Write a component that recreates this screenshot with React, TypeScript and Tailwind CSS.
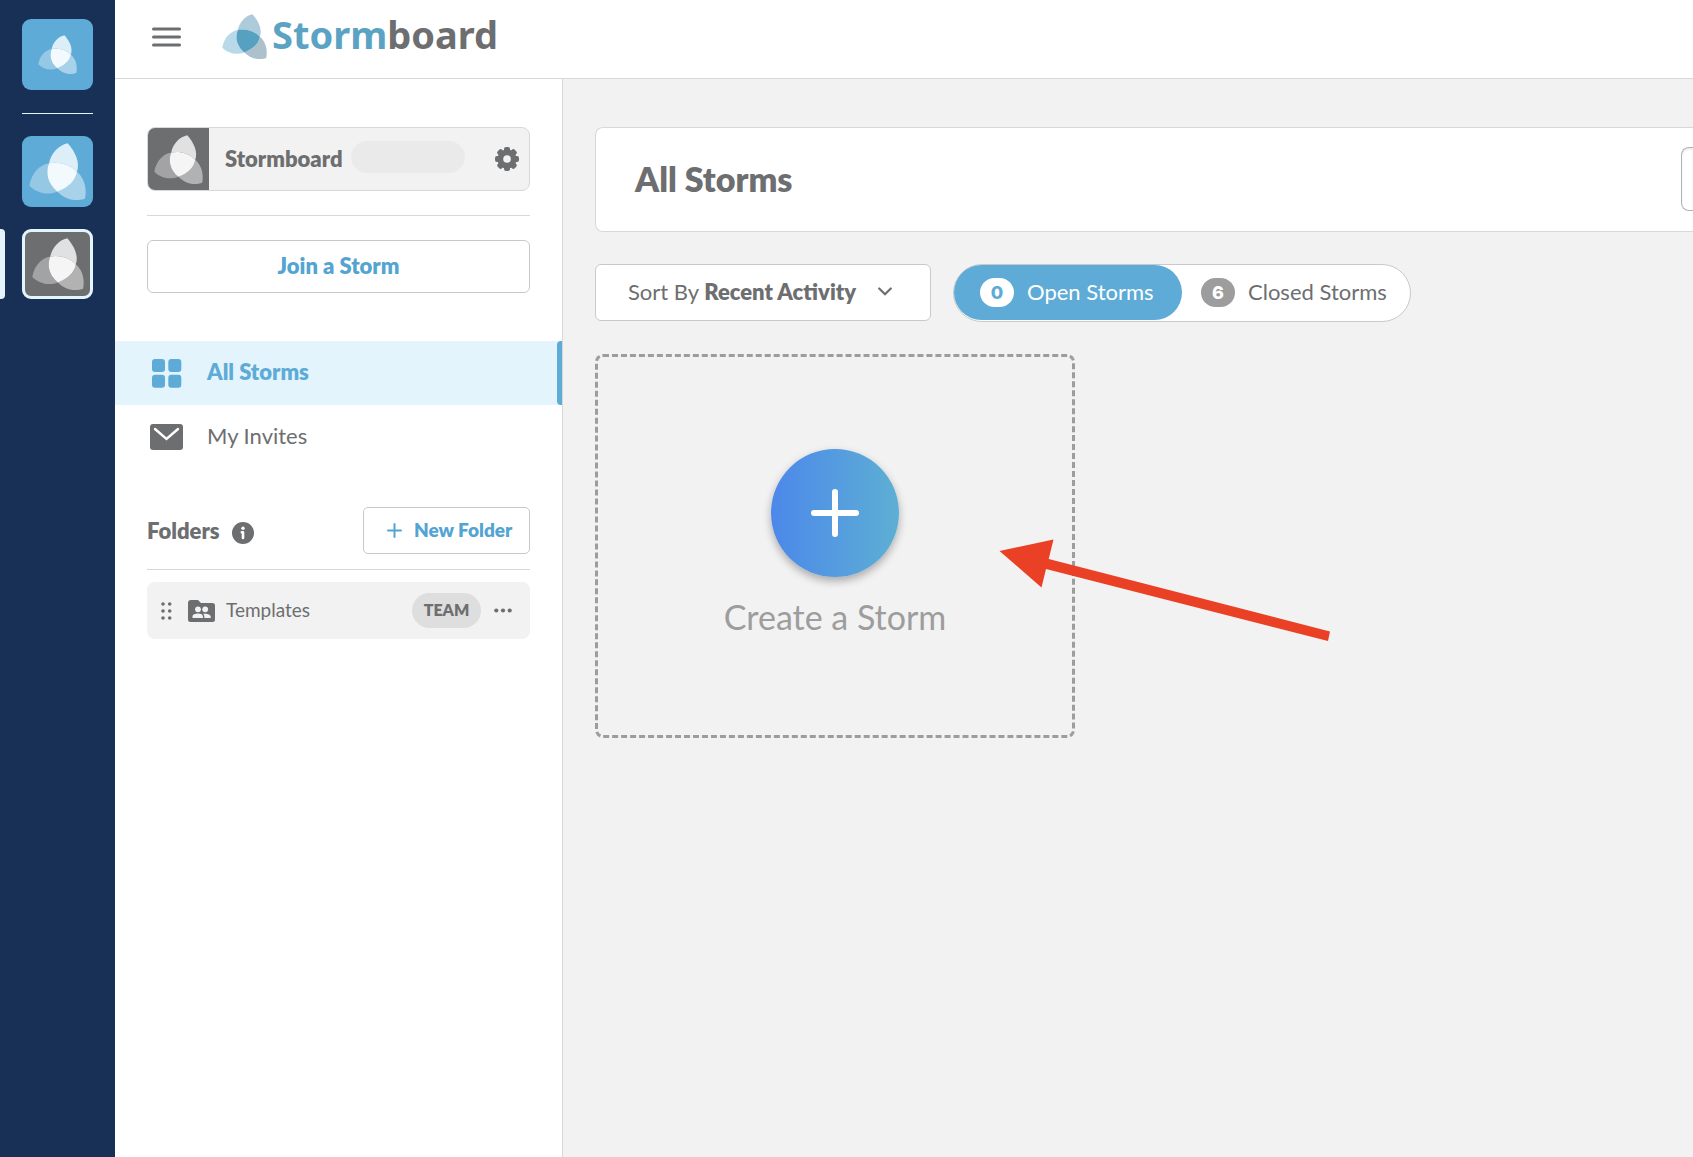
import React from "react";

type Tones = { left: string; top: string; right: string; center: string };

const BLUE_TONES: Tones = { left: "#94c8e5", top: "#dceef7", right: "#a7d2ea", center: "#f3fafd" };
const GREY_TONES: Tones = { left: "#a3a3a5", top: "#e1e1e2", right: "#b2b2b3", center: "#f5f5f5" };
const BRAND_TONES: Tones = { left: "#b9d9ea", top: "#aecbdb", right: "#adc1cc", center: "#57a1c0" };

function Petals({ tones, className }: { tones: Tones; className: string }) {
  return (
    <svg viewBox="21 21 171 171" className={className} aria-hidden="true">
      <path fill={tones.top} d="M137 22C160 48 175 80 165 107C143 85 110 76 81 82C87 54 108 28 137 22Z" />
      <path fill={tones.left} d="M22 149C30 108 55 86 81 82C70 110 76 143 106 167C78 178 45 172 22 149Z" />
      <path fill={tones.right} d="M165 107C188 127 195 158 189 188C160 198 130 191 106 167C138 155 161 134 165 107Z" />
      <path fill={tones.center} d="M81 82C110 76 143 85 165 107C161 134 138 155 106 167C76 143 70 110 81 82Z" />
    </svg>
  );
}

function Rail() {
  return (
    <nav aria-label="Teams" className="flex w-[115px] shrink-0 flex-col items-center bg-[#183055] pt-[19px]">
      <button aria-label="Home" className="flex size-[71px] items-center justify-center rounded-[9px] bg-[#5dabd6]">
        <Petals tones={BLUE_TONES} className="size-[39px]" />
      </button>
      <hr className="mt-[23px] mb-[22px] w-[71px] border-t border-[#e3f4fd]" />
      <button aria-label="Stormboard" className="flex size-[71px] items-center justify-center rounded-[9px] bg-[#5dabd6]">
        <Petals tones={BLUE_TONES} className="size-[57px]" />
      </button>
      <div className="relative mt-[22px] flex w-full justify-center">
        <span className="absolute inset-y-0 left-0 w-[5px] rounded-r bg-[#e3f4fd]" />
        <button
          aria-label="Current team"
          className="flex h-[70px] w-[71px] items-center justify-center rounded-[9px] border-[3px] border-[#e3f4fd] bg-[#6d6e70]"
        >
          <Petals tones={GREY_TONES} className="size-[52px]" />
        </button>
      </div>
    </nav>
  );
}

function Header() {
  return (
    <header className="flex h-[79px] items-center border-b border-[#d5d7de] bg-white pb-1 pl-[37px]">
      <button aria-label="Menu">
        <svg viewBox="0 0 29 20" className="h-5 w-[29px]" stroke="#6d6e70" strokeWidth="3" strokeLinecap="round">
          <path d="M1.5 2H27.5M1.5 10H27.5M1.5 18H27.5" />
        </svg>
      </button>
      <a href="#home" className="ml-[41px] flex items-center pb-[2px]">
        <Petals tones={BRAND_TONES} className="size-[45px]" />
        <span className="ml-[5px] pb-1 font-['Noto_Sans'] text-[38px] leading-10 font-bold text-[#5ba3c3]">
          Storm<span className="text-[#6d6e70]">board</span>
        </span>
      </a>
    </header>
  );
}

function Gear() {
  return (
    <svg viewBox="0 0 24 24" className="size-6" aria-hidden="true">
      <g fill="#6d6e70">
        {[0, 45, 90, 135].map((a) => (
          <rect key={a} x="9" y="0" width="6" height="24" rx="2" transform={`rotate(${a} 12 12)`} />
        ))}
        <circle cx="12" cy="12" r="9.6" />
      </g>
      <circle cx="12" cy="12" r="3.8" fill="#f2f2f2" />
    </svg>
  );
}

function Sidebar() {
  return (
    <aside className="w-[448px] shrink-0 border-r border-[#d5d9de] bg-white pt-12">
      <section className="mx-8">
        <div className="flex h-16 items-center overflow-hidden rounded-lg border border-[#d5d9de] bg-[#f2f2f2] pr-[10px]">
          <span className="flex h-full w-[61px] items-center justify-center bg-[#6d6e70]">
            <Petals tones={GREY_TONES} className="size-[49px]" />
          </span>
          <span className="ml-4 pb-[2px] text-[22px] font-extrabold">Stormboard</span>
          <span className="mb-1 ml-2 h-8 w-[114px] rounded-full bg-[#eaeaea]" />
          <button aria-label="Team settings" className="ml-auto">
            <Gear />
          </button>
        </div>
        <hr className="my-6 border-t border-[#d5d9de]" />
        <button className="h-[53px] w-full rounded-md border border-[#c8c9cb] pb-[2px] text-[22px] font-extrabold text-[#54a4d2]">
          Join a Storm
        </button>
      </section>

      <nav aria-label="Storms" className="mt-12 text-[22px]">
        <a href="#all" aria-current="page" className="relative flex h-16 items-center bg-[#e3f4fd] pl-[37px] font-extrabold text-[#5dabd6]">
          <svg viewBox="0 0 30 29" className="h-[29px] w-[30px]" fill="currentColor" aria-hidden="true">
            <rect x="0" y="0" width="13" height="13" rx="3" />
            <rect x="16.3" y="0" width="13" height="13" rx="3" />
            <rect x="0" y="15.7" width="13" height="13" rx="3" />
            <rect x="16.3" y="15.7" width="13" height="13" rx="3" />
          </svg>
          <span className="ml-[25px] pb-1">All Storms</span>
          <span className="absolute inset-y-0 right-0 w-[5px] rounded-l bg-[#5dabd6]" />
        </a>
        <a href="#invites" className="flex h-16 items-center pl-[35px]">
          <svg viewBox="0 0 33 26" className="h-[26px] w-[33px]" aria-hidden="true">
            <rect width="33" height="26" rx="3" fill="#6d6e70" />
            <path d="M5 5L16.5 15L28 5" fill="none" stroke="#fff" strokeWidth="2.4" strokeLinecap="round" />
          </svg>
          <span className="ml-6 pb-1">My Invites</span>
        </a>
      </nav>

      <section className="mx-8 mt-[38px]">
        <div className="flex items-center">
          <h2 className="text-[22px] font-extrabold">Folders</h2>
          <svg viewBox="0 0 22 22" className="mt-1 ml-3 size-[22px]" aria-label="About folders" role="img">
            <circle cx="11" cy="11" r="11" fill="#6d6e70" />
            <circle cx="11" cy="6.2" r="1.7" fill="#fff" />
            <path d="M9.8 10.2H11V16" fill="none" stroke="#fff" strokeWidth="2.6" strokeLinejoin="round" strokeLinecap="round" />
          </svg>
          <button className="ml-auto flex h-[47px] w-[167px] items-center rounded-[5px] border border-[#c8c9cb] pl-[23px] text-[19px] font-extrabold text-[#54a4d2]">
            <svg viewBox="0 0 15 15" className="mr-3 size-[15px]" stroke="currentColor" strokeWidth="2" strokeLinecap="round" aria-hidden="true">
              <path d="M7.5 1V14M1 7.5H14" />
            </svg>
            <span className="pb-px">New Folder</span>
          </button>
        </div>
        <hr className="mt-[15px] mb-3 border-t border-[#d5d9de]" />
        <div className="flex h-[57px] items-center rounded-lg bg-[#f2f2f2] pr-[18px] pl-[14px]">
          <svg viewBox="0 0 11 18" className="h-[18px] w-[11px]" fill="#6d6e70" aria-hidden="true">
            {[2, 9, 16].map((y) => (
              <g key={y}>
                <circle cx="2" cy={y} r="1.8" />
                <circle cx="8.7" cy={y} r="1.8" />
              </g>
            ))}
          </svg>
          <svg viewBox="0 0 27 22" className="ml-4 h-[22px] w-[27px]" aria-hidden="true">
            <path fill="#6d6e70" d="M3 0H10L13 3H24.5A2.5 2.5 0 0 1 27 5.5V19.5A2.5 2.5 0 0 1 24.5 22H2.5A2.5 2.5 0 0 1 0 19.5V3A3 3 0 0 1 3 0Z" />
            <g fill="#f2f2f2">
              <circle cx="10" cy="9.3" r="2.9" />
              <circle cx="17.2" cy="9.3" r="2.9" />
              <path d="M4.5 18V16.5C4.5 14.5 7 13.6 10 13.6S14.6 14.5 15 16.5V18Z" />
              <path d="M16.3 18V16.5C16.3 15.3 15.9 14.5 15.1 13.8C18.5 13.2 22.7 14.3 22.7 16.5V18Z" />
            </g>
          </svg>
          <span className="ml-[11px] text-[19px]">Templates</span>
          <span className="ml-auto flex h-[35px] w-[69px] items-center justify-center rounded-full bg-[#dedede] pb-px text-base font-extrabold">
            TEAM
          </span>
          <button aria-label="Folder options" className="ml-[13px]">
            <svg viewBox="0 0 18 5" className="h-[5px] w-[18px]" fill="#6d6e70">
              <circle cx="2.3" cy="2.5" r="2.1" />
              <circle cx="9" cy="2.5" r="2.1" />
              <circle cx="15.7" cy="2.5" r="2.1" />
            </svg>
          </button>
        </div>
      </section>
    </aside>
  );
}

function Main() {
  return (
    <main className="min-w-0 flex-1 overflow-hidden bg-[#f2f2f2] pt-12 pl-8">
      <div className="flex h-[105px] items-center justify-between rounded-l-lg border border-r-0 border-[#d5d9de] bg-white pb-[2px] pl-[39px]">
        <h1 className="text-[34px] leading-10 font-extrabold">All Storms</h1>
        <input aria-label="Search storms" className="h-16 w-3 rounded-l-lg border border-r-0 border-[#b0b0b0] bg-white shadow-[inset_0_2px_2px_#eeeeee]" />
      </div>

      <div className="mt-8 flex items-start text-[22px]">
        <div className="relative flex h-[57px] w-[336px] items-center rounded-md border border-[#c8c9cb] bg-white pb-[2px] pl-8">
          <label htmlFor="sort">Sort By</label>
          <select id="sort" className="ml-[5px] w-[196px] appearance-none bg-transparent font-extrabold outline-none">
            <option>Recent Activity</option>
          </select>
          <svg viewBox="0 0 14 9" className="pointer-events-none absolute right-[38px] h-[9px] w-[14px]" fill="none" stroke="#6d6e70" strokeWidth="2.2" strokeLinecap="round" aria-hidden="true">
            <path d="M1.2 1.5L7 7.3L12.8 1.5" />
          </svg>
        </div>
        <div className="ml-[22px] flex h-[58px] w-[458px] rounded-full border border-[#c8c9cb] bg-white pb-px">
          <button aria-pressed="true" className="flex w-[228px] items-center rounded-full bg-[#5dabd6] pl-[26px] text-white">
            <span className="flex h-[29px] w-[34px] items-center justify-center rounded-full bg-white font-[Inter] text-lg font-extrabold text-[#5dabd6]">0</span>
            <span className="ml-[13px] pb-[2px]">Open Storms</span>
          </button>
          <button aria-pressed="false" className="flex flex-1 items-center pl-[19px]">
            <span className="flex h-[29px] w-[34px] items-center justify-center rounded-full bg-[#9d9d9d] font-[Inter] text-lg font-extrabold text-white">6</span>
            <span className="ml-[13px] pb-[2px]">Closed Storms</span>
          </button>
        </div>
      </div>

      <div className="relative mt-8 w-[480px]">
        <button className="flex h-[384px] w-full flex-col items-center rounded-lg border-[3px] border-dashed border-[#9d9d9d] pt-[92px] text-[#9d9d9d]">
          <span className="flex size-32 items-center justify-center rounded-full bg-linear-to-r/srgb from-[#4c88ea] to-[#5dafd4] shadow-[0_4px_8px_rgba(0,0,0,0.3)]">
            <svg viewBox="0 0 48 48" className="size-12" stroke="#fff" strokeWidth="6" strokeLinecap="round" aria-hidden="true">
              <path d="M24 3V45M3 24H45" />
            </svg>
          </span>
          <span className="mt-5 text-[34px] leading-10">Create a Storm</span>
        </button>
        <svg viewBox="0 0 332 104" className="pointer-events-none absolute top-[184px] left-[404px] h-[104px] w-[332px]" fill="#ea4025" aria-hidden="true">
          <path d="M0.5 13L54.5 1.5L49.7 21L331 93.5L329 103L47 31L42.5 49.5Z" />
        </svg>
      </div>
    </main>
  );
}

export default function App() {
  return (
    <div className="flex min-h-screen overflow-hidden bg-white font-[Lato,sans-serif] text-[#6d6e70]">
      <Rail />
      <div className="flex min-w-0 flex-1 flex-col">
        <Header />
        <div className="flex flex-1">
          <Sidebar />
          <Main />
        </div>
      </div>
    </div>
  );
}
